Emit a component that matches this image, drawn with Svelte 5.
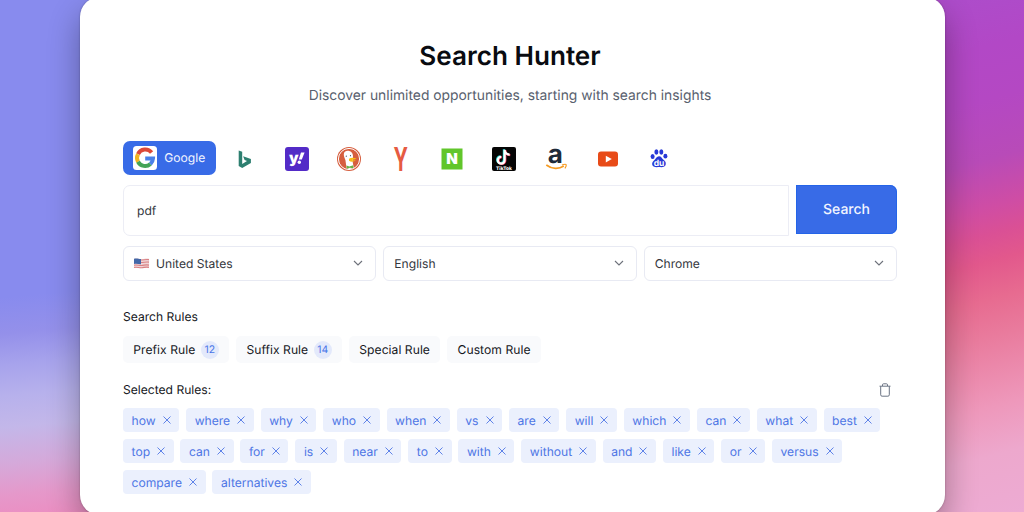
<script>
  const engines = ['bing', 'yahoo', 'duckduckgo', 'yandex', 'naver', 'tiktok', 'amazon', 'youtube', 'baidu'];

  const rules = [
    { label: 'Prefix Rule', count: 12 },
    { label: 'Suffix Rule', count: 14 },
    { label: 'Special Rule' },
    { label: 'Custom Rule' }
  ];

  let query = $state('pdf');
  let selected = $state([
    'how', 'where', 'why', 'who', 'when', 'vs', 'are', 'will', 'which', 'can', 'what', 'best',
    'top', 'can', 'for', 'is', 'near', 'to', 'with', 'without', 'and', 'like', 'or', 'versus',
    'compare', 'alternatives'
  ]);

  function removeRule(i) {
    selected = selected.filter((_, n) => n !== i);
  }
</script>

{#snippet chevron()}
  <svg class="chevron" viewBox="0 0 10 10" aria-hidden="true"><path d="M1 3l4 4 4-4" /></svg>
{/snippet}

{#snippet logo(name)}
  <svg class="logo" viewBox="0 0 24 24" aria-hidden="true">
    {#if name === 'bing'}
      <path d="M5.7 3.5l3.5 1.2v12.2l4.8-2.8-2.4-1.1-1.5-3.8 7.8 2.8v3.9l-8.7 5-3.5-1.9z" fill="#2d7f70" />
    {:else if name === 'yahoo'}
      <rect width="24" height="24" rx="3" fill="#532bc7" />
      <text x="4" y="15.8" class="heavy" font-size="15" fill="#fff">y</text>
      <path d="M16 5.5h3.6l-2.8 7h-3z" fill="#fff" />
      <circle cx="14.3" cy="15.3" r="1.7" fill="#fff" />
    {:else if name === 'duckduckgo'}
      <circle cx="12" cy="12" r="12" fill="#d65f3f" />
      <circle cx="12" cy="12" r="10.6" fill="none" stroke="#fff" stroke-width="1" />
      <path d="M7 6.2c.2-2 3-3.1 5.300-2.300 2.700.8 4 3 3.700 6l-.4 4.500 1.200 6.700c-2.700 1.100-5.200 1-7.200.1L8.400 13C7.500 10.400 6.300 8.400 7 6.200z" fill="#fff" />
      <path d="M12 11.700c2-1.200 5.200-1 7.500-.2-1.700 1.200-3.600 1.200-4.700 1.500 1.200.6 2.900.4 4 .3-1.500 1.600-5 1.800-6.800.5z" fill="#f8bd18" />
      <path d="M9.400 18.500l3 1.100 3.800-1.300.2 3-3.600-.5-3 1z" fill="#65b445" />
      <circle cx="9.3" cy="9.2" r=".6" fill="#31506c" />
      <circle cx="13.5" cy="8.7" r=".6" fill="#31506c" />
    {:else if name === 'yandex'}
      <text transform="translate(11.8 24) scale(.6 1)" text-anchor="middle" font-size="33" font-weight="700" fill="#e65b42">Y</text>
    {:else if name === 'naver'}
      <rect x="1.5" y="1.5" width="21" height="21" fill="#61c62b" />
      <text x="12" y="17.3" text-anchor="middle" class="heavy" font-size="15" fill="#fff">N</text>
    {:else if name === 'tiktok'}
      <rect width="24" height="24" rx="2" fill="#050505" />
      <g fill="none" stroke-width="2.2">
        <path d="M11.9 2.300v10.500a3.400 3.400 0 1 1-3.400-3.400M11.900 2.800c.4 2.700 2.400 4.300 5 4.500" stroke="#2de2dc" />
        <path d="M13.3 3.100v10.500a3.400 3.400 0 1 1-3.400-3.400M13.300 3.600c.4 2.700 2.400 4.300 5 4.500" stroke="#f53b5d" />
        <path d="M12.6 2.700v10.500a3.400 3.400 0 1 1-3.400-3.400M12.600 3.200c.4 2.700 2.400 4.300 5 4.500" stroke="#fff" />
      </g>
      <text x="12" y="22.5" text-anchor="middle" font-size="4.8" font-weight="800" fill="#fff">TikTok</text>
    {:else if name === 'amazon'}
      <text x="11.3" y="16.2" text-anchor="middle" font-size="26" font-weight="700" fill="#1e2a39">a</text>
      <path d="M2.3 18c5.800 4.400 12.800 4.200 17.500 1" fill="none" stroke="#f59b22" stroke-width="1.6" />
      <path d="M17.9 18c2.200-.8 4-.8 4.300-.3.2.6-.3 2.200-1.300 3.600" fill="none" stroke="#f59b22" stroke-width="1.2" />
    {:else if name === 'youtube'}
      <rect x="2" y="4.6" width="20" height="15" rx="3" fill="#e84b18" />
      <path d="M9.8 8.700l6 3.400-6 3.500z" fill="#fff" />
    {:else}
      <g fill="#2739d7">
        <ellipse cx="5.6" cy="9.6" rx="2" ry="2.5" />
        <ellipse cx="9.4" cy="5" rx="2" ry="2.7" />
        <ellipse cx="14.3" cy="5" rx="2" ry="2.7" />
        <ellipse cx="18.4" cy="9.2" rx="2" ry="2.4" />
        <path d="M12 9.300c2.300 0 2.900 2.200 4.500 3.500 1.700 1.400 2.600 2.600 2.200 4.700-.5 2.500-2.800 3-6.700 2.600-4 .4-6.400-.2-6.800-2.600-.3-2 .8-3.400 2.300-4.600C9.100 11.700 9.700 9.300 12 9.300z" />
      </g>
      <text x="12" y="18.6" text-anchor="middle" font-size="8.5" font-weight="700" fill="#fff">du</text>
    {/if}
  </svg>
{/snippet}

<main>
  <section class="card">
    <h1>Search Hunter</h1>
    <p class="tagline">Discover unlimited opportunities, starting with search insights</p>

    <nav class="engines">
      <button class="engine active">
        <svg class="google" viewBox="0 0 24 24" aria-hidden="true">
          <rect width="24" height="24" rx="3.5" fill="#fff" />
          <g fill="none" stroke-width="4">
            <path d="M18.6 6.600A8 8 0 0 0 5 8.200" stroke="#dc4938" />
            <path d="M5 8.200A8 8 0 0 0 5 15.800" stroke="#f2b51f" />
            <path d="M5 15.800A8 8 0 0 0 17.400 17.900" stroke="#44a456" />
            <path d="M17.4 17.900A8 8 0 0 0 20 12.400H12.200" stroke="#4a80e8" />
          </g>
        </svg>
        <span>Google</span>
      </button>
      {#each engines as name}
        <button class="engine" aria-label={name}>{@render logo(name)}</button>
      {/each}
    </nav>

    <div class="search">
      <input bind:value={query} aria-label="Keyword" />
      <button class="submit">Search</button>
    </div>

    <div class="selects">
      <button class="select">
        <svg class="flag" viewBox="0 0 15 11" aria-hidden="true">
          <path d="M0 .8c3-1 5 .7 8 .3 3-.4 4.500-1 7-.3v9c-3-.7-4.500 0-7 .3-3 .4-5-1.200-8-.3z" fill="#f0d5d6" />
          <path d="M7 2c3 0 5-1 8-.4M7 4.500c3 0 5-1 8-.4M0 7.200c3-.8 5 .5 8 .2 3-.4 4.500-1 7-.3M0 9.500c3-.8 5 .5 8 .2 3-.4 4.500-1 7-.3" fill="none" stroke="#d98184" stroke-width="1.1" />
          <path d="M0 .8c3-1 4.500.3 7 .3v5.200c-2.500.2-4-1-7-.2z" fill="#4468a8" />
        </svg>
        <span>United States</span>
        {@render chevron()}
      </button>
      <button class="select"><span>English</span>{@render chevron()}</button>
      <button class="select"><span>Chrome</span>{@render chevron()}</button>
    </div>

    <h2>Search Rules</h2>
    <div class="rules">
      {#each rules as rule}
        <button class="rule">
          {rule.label}
          {#if rule.count}<span class="count">{rule.count}</span>{/if}
        </button>
      {/each}
    </div>

    <header>
      <h2>Selected Rules:</h2>
      <button class="clear" onclick={() => (selected = [])} aria-label="Clear all">
        <svg viewBox="0 0 12 14" aria-hidden="true">
          <path d="M.5 3.200h11M3.500 3V1.800q0-1 1-1h3q1 0 1 1V3M1.700 3.200v8.600q0 1.400 1.400 1.400h5.800q1.400 0 1.400-1.400V3.200" />
        </svg>
      </button>
    </header>

    <div class="chips">
      {#each selected as word, i}
        <span class="chip">
          {word}
          <button onclick={() => removeRule(i)} aria-label="Remove {word}">
            <svg viewBox="0 0 8 8" aria-hidden="true"><path d="M.5.5l7 7M7.500.5l-7 7" /></svg>
          </button>
        </span>
      {/each}
    </div>
  </section>
</main>

<style>
  :global(body) {
    margin: 0;
  }
  main {
    height: 512px;
    overflow: hidden;
    display: flex;
    align-items: center;
    justify-content: center;
    font-family: Inter, 'Liberation Sans', sans-serif;
    font-size: 12.1px;
    text-rendering: geometricPrecision;
    background:
      linear-gradient(165deg, #ac4dcb 0%, #b248c6 12%, #b448c3 22%, #b84bb8 33%, #cf4da4 42%, #da5095 47%, #e2588c 52%, #e76b90 59%, #e97b9d 66%, #ee98bb 79%, #eda8cd 88%, #edabd3 100%) right / 110px 100% no-repeat,
      linear-gradient(175deg, #888bee 0%, #888bee 57%, #9490ea 64%, #a7a3ec 70%, #b7b1ec 76%, #c3b7e9 82%, #d5a9da 89%, #e598ca 95%, #ec8dc1 100%) left / 110px 100% no-repeat;
  }
  button,
  input {
    font: inherit;
    text-rendering: inherit;
    border: 0;
    margin: 0;
    padding: 0;
    background: none;
    cursor: pointer;
  }
  svg {
    display: block;
    flex: none;
    overflow: visible;
  }
  .heavy {
    font-weight: 900;
  }
  .card {
    box-sizing: border-box;
    flex: none;
    width: 865px;
    height: 518px;
    padding: 42px 47.5px 0 43.5px;
    border-radius: 20px;
    background: #fff;
    box-shadow:
      0 0 2px rgba(0, 0, 0, 0.3),
      0 16px 32px rgba(0, 0, 0, 0.33);
  }
  h1 {
    margin: 0;
    font-size: 26.1px;
    line-height: 36px;
    font-weight: 600;
    text-align: center;
    color: #090b10;
  }
  .tagline {
    margin: 11px 0 0;
    font-size: 13.85px;
    line-height: 20px;
    text-align: center;
    color: #59616e;
  }
  .engines {
    display: flex;
    gap: 7px;
    height: 34px;
    margin-top: 35px;
  }
  .engine {
    width: 44.75px;
    display: flex;
    align-items: center;
    justify-content: center;
    padding-top: 2px;
  }
  .engine.active {
    width: 92.5px;
    margin-right: 0.5px;
    padding: 0;
    gap: 7px;
    border-radius: 7px;
    background: #386be7;
    color: #f2f5ff;
  }
  .active span {
    padding-bottom: 1px;
  }
  .logo,
  .google {
    width: 24px;
    height: 24px;
  }
  .search {
    display: flex;
    align-items: flex-start;
    gap: 7px;
    margin-top: 10px;
  }
  .search input {
    flex: 1;
    box-sizing: border-box;
    height: 51px;
    padding: 0 13px;
    border: 1.5px solid #ecedf5;
    border-radius: 7px 0 0 7px;
    color: #34373d;
    outline: none;
  }
  .submit {
    width: 101px;
    height: 49px;
    border-radius: 0 7px 7px 0;
    background: #386be7;
    box-shadow: inset 0 0 0 1px #2464e8;
    color: #f2f5ff;
    font-size: 14px;
    font-weight: 500;
  }
  .selects {
    display: grid;
    grid-template-columns: repeat(3, 1fr);
    gap: 7px;
    margin-top: 10px;
  }
  .select {
    height: 34.5px;
    display: flex;
    align-items: center;
    padding: 0 12px 0 10px;
    border: 1px solid #e8eaf3;
    border-radius: 6px;
    color: #34373d;
  }
  .flag {
    width: 15px;
    height: 11px;
    margin-right: 7px;
  }
  .chevron {
    width: 10px;
    height: 10px;
    margin-left: auto;
    fill: none;
    stroke: #6d717a;
    stroke-width: 1.1;
  }
  h2 {
    margin: 0;
    font-size: inherit;
    line-height: 18px;
    font-weight: 400;
    color: #15171c;
  }
  .selects + h2 {
    margin-top: 27.5px;
  }
  .rules {
    display: flex;
    gap: 7px;
    margin-top: 10px;
  }
  .rule {
    height: 27px;
    display: flex;
    align-items: center;
    gap: 5.5px;
    padding: 0 10.3px;
    border-radius: 5px;
    background: #f9fafc;
    color: #15171c;
    letter-spacing: 0.05px;
  }
  .count {
    width: 18px;
    height: 18px;
    border-radius: 50%;
    background: #e3e9fb;
    color: #4874e8;
    font-size: 10.4px;
    line-height: 18px;
    text-align: center;
  }
  header {
    display: flex;
    align-items: center;
    justify-content: space-between;
    margin-top: 17.5px;
    padding-right: 6px;
  }
  .clear svg {
    width: 12px;
    height: 14px;
    fill: none;
    stroke: #6b7484;
  }
  .chips {
    display: flex;
    flex-wrap: wrap;
    gap: 6.9px;
    margin-top: 9.5px;
  }
  .chip {
    height: 24.2px;
    display: flex;
    align-items: center;
    gap: 7px;
    padding: 0 8.55px;
    border-radius: 4px;
    background: #ebf0fd;
    color: #4e76e5;
  }
  .chip svg {
    width: 8px;
    height: 8px;
    fill: none;
    stroke: #5f83e8;
  }
</style>
